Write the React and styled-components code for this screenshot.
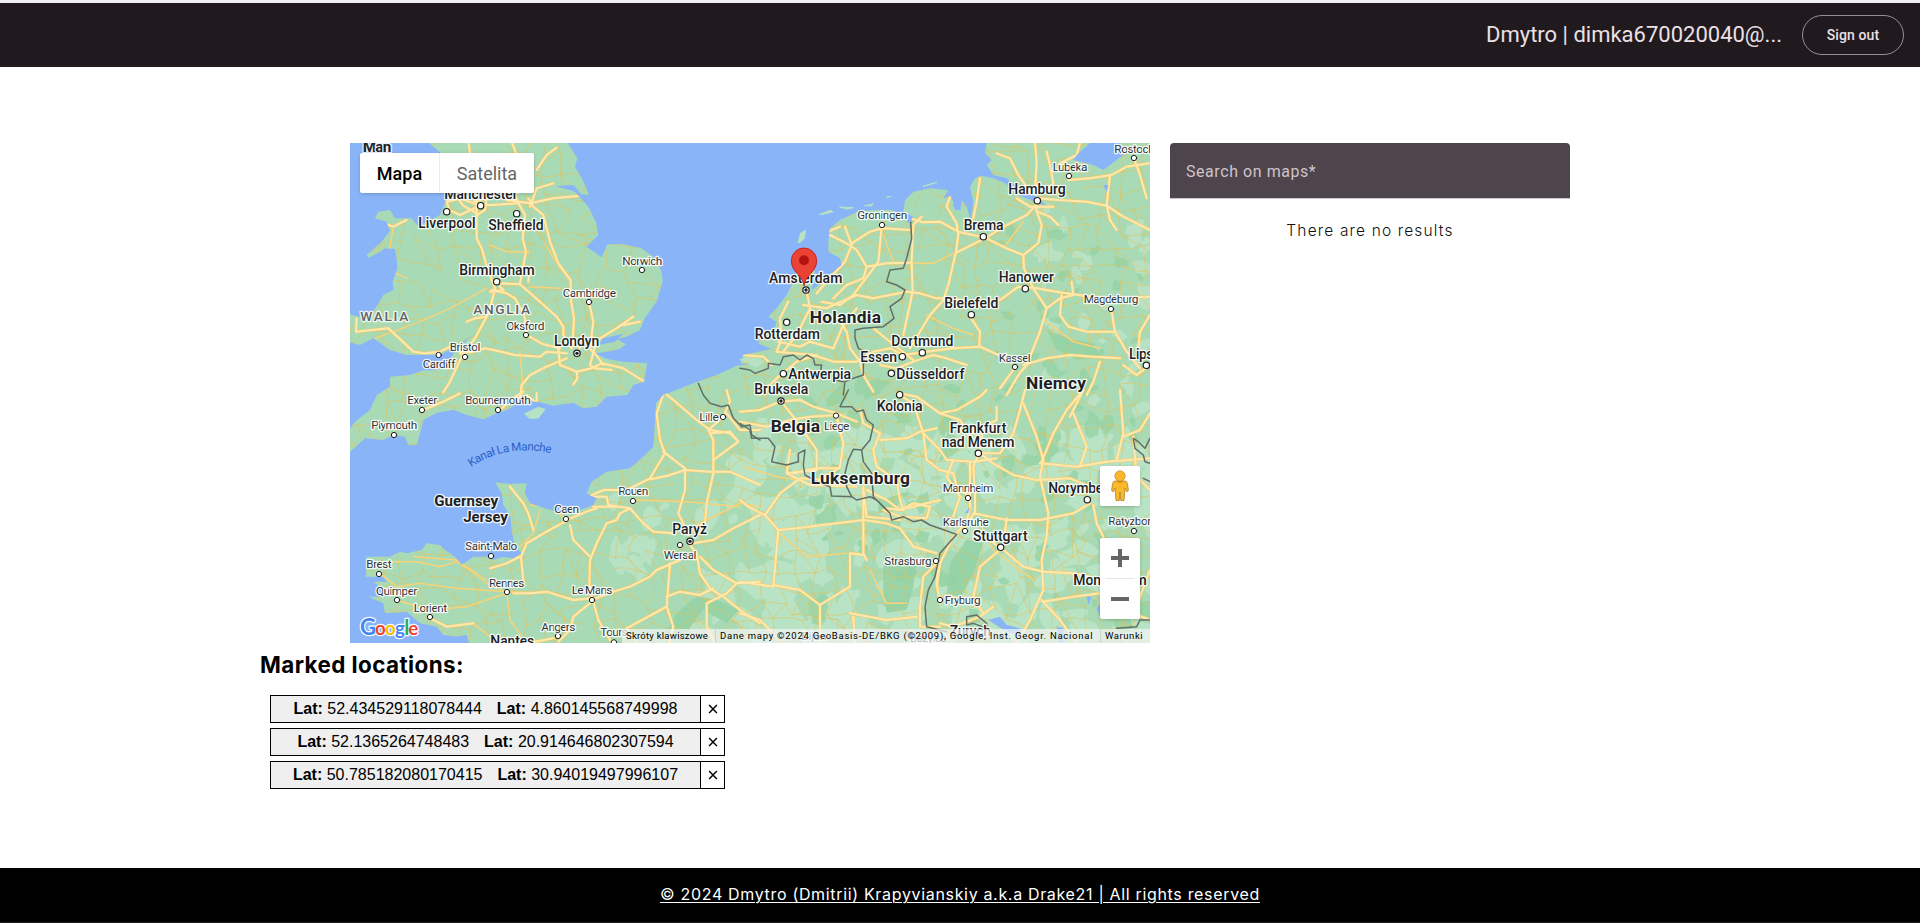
import React from 'react';
import styled, { createGlobalStyle } from 'styled-components';

const GlobalStyle = createGlobalStyle`
  *, *::before, *::after { box-sizing: border-box; }
  body { margin: 0; background: #fff; overflow: hidden; font-family: Inter, "Liberation Sans", sans-serif; }
  button { font: inherit; color: inherit; padding: 0; margin: 0; cursor: pointer; }
`;

const Page = styled.div`
  display: flex;
  flex-direction: column;
  height: 923px;
  border-top: 3px solid #f1eff2;
`;

const Header = styled.header`
  display: flex;
  align-items: center;
  justify-content: flex-end;
  gap: 20px;
  height: 64px;
  padding-right: 16px;
  background: #201a1e;
  color: #ebe0e4;
  font-family: Roboto, sans-serif;
`;

const UserName = styled.span`
  width: 296px;
  font-size: 22px;
  line-height: 28px;
  white-space: nowrap;
`;

const SignOut = styled.button`
  width: 102px;
  height: 40px;
  border: 1px solid #988e93;
  border-radius: 20px;
  background: transparent;
  font-size: 14px;
  font-weight: 500;
  letter-spacing: 0.1px;
`;

const Main = styled.main`
  flex: 1;
  width: 1400px;
  margin: 0 auto;
  padding-top: 76px;
`;

const MapRow = styled.section`
  display: flex;
  justify-content: center;
  gap: 20px;
`;

const MapFrame = styled.div`
  position: relative;
  width: 800px;
  height: 500px;
  overflow: hidden;
  background: #8ab4f8;
  font-family: Roboto, sans-serif;
`;

const MapDrawing = styled.svg`
  display: block;
  width: 100%;
  height: 100%;
`;

const MapTypes = styled.div`
  position: absolute;
  left: 10px;
  top: 10px;
  display: flex;
  height: 40px;
  border-radius: 2px;
  background: #fff;
  box-shadow: 0 1px 4px -1px rgba(0, 0, 0, 0.3);
`;

const MapType = styled.button`
  width: ${(p) => (p.$active ? '79px' : '95px')};
  border: 0;
  border-left: ${(p) => (p.$active ? '0' : '1px solid #ececec')};
  background: transparent;
  color: ${(p) => (p.$active ? '#000' : '#666')};
  font-size: 18px;
  font-weight: ${(p) => (p.$active ? 500 : 400)};
`;

const ControlPanel = styled.div`
  position: absolute;
  right: 10px;
  top: ${(p) => p.$top}px;
  display: flex;
  flex-direction: column;
  align-items: center;
  width: 40px;
  border-radius: 2px;
  background: #fff;
  box-shadow: 0 1px 4px -1px rgba(0, 0, 0, 0.3);
`;

const ControlButton = styled.button`
  display: grid;
  place-items: center;
  width: 40px;
  height: 40px;
  border: 0;
  background: transparent;
`;

const ControlDivider = styled.i`
  width: 30px;
  height: 1px;
  background: #e6e6e6;
`;

const Attribution = styled.div`
  position: absolute;
  right: 0;
  bottom: 0;
  display: flex;
  height: 14px;
  color: #000;
  font-size: 9.5px;
  line-height: 14px;
  white-space: nowrap;
`;

const Credit = styled.span`
  width: ${(p) => p.$w}px;
  padding-left: 4px;
  letter-spacing: ${(p) => p.$spacing}px;
  background: rgba(245, 245, 245, 0.7);
  border-left: ${(p) => (p.$line ? '1px solid #c9d4cb' : '0')};
`;

const SearchColumn = styled.aside`
  display: flex;
  flex-direction: column;
  width: 400px;
`;

const SearchField = styled.div`
  height: 56px;
  padding: 0 16px;
  border-bottom: 1px solid #cfc3cb;
  border-radius: 4px 4px 0 0;
  background: #4e444b;
  color: #d0c3cb;
  font-family: Roboto, sans-serif;
  font-size: 16px;
  line-height: 57px;
  letter-spacing: 0.56px;
`;

const EmptyResults = styled.p`
  margin: 19px 0 0;
  color: #111;
  text-align: center;
  font-size: 15.5px;
  font-weight: 300;
  line-height: 26px;
  letter-spacing: 1.15px;
`;

const Heading = styled.h2`
  margin: 5px 0 0;
  color: #000;
  font-size: 22.4px;
  font-weight: 700;
  line-height: 34px;
  letter-spacing: 0.42px;
`;

const LocationList = styled.div`
  display: flex;
  flex-direction: column;
  gap: 5px;
  padding: 13px 0 0 10px;
`;

const LocationRow = styled.div`
  display: flex;
  width: 455px;
  height: 28px;
  border: 1px solid #000;
  color: #000;
  font: 16px/26px "Liberation Sans", Arial, sans-serif;
`;

const Coordinates = styled.button`
  display: flex;
  justify-content: center;
  gap: 15px;
  width: 429px;
  border: 0;
  background: #efefef;
`;

const Remove = styled.button`
  display: grid;
  place-items: center;
  flex: 1;
  border: 0;
  border-left: 1px solid #000;
  background: #fff;
`;

const Footer = styled.footer`
  height: 55px;
  border-bottom: 1px solid #202020;
  background: #000;
  color: #fff;
  text-align: center;
  font-size: 16px;
  line-height: 53px;
  letter-spacing: 0.67px;
`;

const FooterLink = styled.a`
  color: inherit;
  text-decoration: underline;
  text-decoration-thickness: 1px;
  text-underline-offset: 2px;
`;

/* The map surface is drawn at 2400 x 1500 units; each quarter has its own origin. */
const QUARTERS = {
  nw: [-30, -24],
  ne: [1170, -24],
  sw: [-30, 741],
  se: [1170, 741],
};

const BRITAIN =
  'M262,20L680,20L700,50L712,70L705,95L728,135L747,180L722,178L690,158L665,158L700,166L722,190L745,215L768,262L775,300L740,335L785,367L802,328L850,328L905,340L945,370L965,410L968,440L950,500L915,548L900,585L860,605L830,612L858,628L840,642L800,650L765,655L800,672L850,680L922,685L918,705L912,740L880,750L862,780L800,785L770,815L730,820L700,803L640,812L600,802L550,795L500,825L470,835L430,853L390,843L340,825L290,833L250,855L240,895L230,930L205,930L195,905L160,900L130,915L75,910L20,960L20,895L45,860L90,825L110,780L150,755L150,725L210,720L250,706L290,706L320,688L345,650L395,602L350,633L300,660L250,660L200,660L150,645L100,610L60,630L20,620L20,535L55,545L100,530L130,480L160,465L158,440L172,400L170,370L165,342L135,340L120,350L87,368L80,360L125,320L150,288L140,260L105,250L115,230L150,225L165,250L215,250L235,275L300,240L310,215L320,190L305,130L300,80L310,60Z';
const CONTINENT =
  'M1910,0L1905,31L1925,51L1910,66L1930,96L1970,106L2010,141L2060,160L2090,190L2010,158L1965,120L1930,106L1895,98L1875,106L1860,131L1870,176L1862,230L1850,191L1835,171L1832,200L1815,201L1810,176L1802,160L1780,166L1795,141L1740,136L1690,146L1665,171L1660,206L1690,221L1675,238L1660,216L1625,201L1570,201L1520,208L1470,231L1440,256L1435,296L1435,331L1470,346L1475,366L1450,386L1420,406L1390,416L1410,371L1395,356L1385,331L1375,316L1350,321L1345,366L1335,406L1310,456L1280,496L1255,521L1280,536L1270,566L1230,576L1225,601L1265,618L1180,636L1172,662L1228,660L1160,668L1100,696L1030,721L940,756L918,781L915,831L910,911L875,946L840,976L770,986L725,1016L710,1051L740,1066L730,1086L690,1101L660,1106L620,1106L570,1091L540,1081L525,1051L530,1021L480,1023L435,1018L455,1051L460,1086L480,1116L485,1161L495,1211L515,1231L490,1246L460,1241L430,1251L410,1241L370,1241L335,1266L315,1241L285,1221L270,1206L230,1201L215,1221L170,1231L150,1226L120,1241L50,1241L48,1301L100,1301L110,1316L70,1316L100,1341L110,1361L55,1361L100,1381L105,1411L170,1406L210,1441L260,1451L280,1476L320,1481L350,1476L360,1510L2410,1510L2410,0L2310,0L2320,36L2280,66L2260,81L2230,66L2170,51L2180,36L2220,0Z';
const ISLANDS =
  'M1344,298L1352,270L1366,262L1364,285L1352,297ZM1410,214L1440,202L1450,206L1418,214ZM1470,192L1510,194L1490,198ZM1545,188L1570,183L1565,188ZM1610,163L1623,160ZM1720,130L1760,118ZM1170,650L1200,640L1245,655L1220,672ZM525,812L565,793L585,799L565,825L540,826ZM1385,371L1410,350L1418,365L1395,375Z';

const highways = {
  nw: [
    'M385,20L390,52', 'M515,20L528,55', 'M650,38L620,60L590,105', 'M590,160L640,145',
    'M410,200L410,310L425,340L442,400L465,460L448,530L405,610L370,655L330,740L310,772',
    'M320,200L360,190L420,212L360,240L328,225L320,200', 'M410,235L370,212L355,192', 'M400,200L440,190L435,225L412,240',
    'M430,210L460,210L530,205', 'M565,190L580,215L610,240L630,320L655,385L692,435L692,490L702,550L698,620L720,640',
    'M522,180L555,240L548,310L558,350L540,445', 'M500,195L570,205L640,190L720,182', 'M590,160L570,215',
    'M475,445L540,448L600,500L650,545L670,575L670,600L695,640',
    'M565,440L568,395', 'M455,465L500,475L525,490L553,540L560,600L610,628L660,640',
    'M450,470L490,465L480,455', 'M50,550L48,590L145,580L180,612L220,650L255,655L300,650L330,635',
    'M360,655L400,650L435,640L460,645L525,660L600,665L620,650L680,655', 'M380,560L405,550L440,545',
    'M765,635L750,690L765,700L815,705', 'M747,502L760,560L750,640L762,655',
    'M780,610L830,580L880,545', 'M655,640L660,690L710,710L755,700L785,685L850,700L910,738', 'M680,670L620,695L570,720L545,750L540,790',
    'M710,710L712,730L700,748', 'M765,655L790,690', 'M100,255L160,275L200,255', 'M850,570L900,560',
  ],
  ne: [
    'M885,24L890,80L885,170L890,230L905,270L895,325L850,360L852,400L880,460L920,520L900,590L880,640L860,690L835,720L800,780',
    'M770,55L810,70L835,120L880,185', 'M895,190L955,195L1040,200L1100,212L1150,245L1230,285', 'M920,50L930,90L940,145L915,175',
    'M1020,24L1010,60L960,85', 'M985,135L1050,130L1115,120L1160,95L1230,85', 'M1182,70L1200,120L1220,190',
    'M1110,120L1100,210L1110,255L1130,285', 'M893,205L860,240L800,270L735,310L650,352', 'M720,130L710,200L700,250',
    'M630,185L620,215L650,265L655,300L648,350L625,450L610,495L570,540L510,640', 'M655,290L735,308L800,340L850,360',
    'M480,240L550,262L600,260L655,290', 'M545,245L520,270L515,380L518,470L490,600', 'M425,275L415,380L340,480L300,510L245,500',
    'M180,340L220,320L265,290L300,275', 'M270,300L320,325L350,345L380,395L370,430L320,450L280,490',
    'M315,275L335,330L315,380L260,440L230,475', 'M380,395L440,385L515,383', 'M335,325L390,290L425,280L510,285',
    'M200,470L210,520L190,560L170,600L130,650', 'M190,510L260,520L280,510L350,480L400,490L450,480L500,470',
    'M500,470L540,475L590,490L640,490L720,510L780,495L835,455L890,460L950,470L1030,482L1110,490L1230,485',
    'M145,500L120,550L125,610L110,650', 'M115,620L180,635L210,620L280,640L310,570L350,520', 'M300,560L320,590L330,640L360,680L370,720L400,770',
    'M110,650L220,660L280,680L350,680L400,650L450,640L490,660L560,650L640,640L720,635L775,660', 'M400,580L450,620L520,675',
    'M690,545L720,590L718,635', 'M850,690L920,670L990,660L1060,665L1140,670', 'M1115,530L1125,590L1160,650L1200,700',
    'M965,480L960,540L985,575L1040,590L1125,590', 'M1080,680L1060,740L1040,780', 'M420,690L470,700L520,680L580,660L620,670L680,690',
    'M10,660L70,665L95,690', 'M130,430L105,490', 'M60,780L110,730L170,680L230,660', 'M825,698L780,760', 'M1150,690L1190,720L1230,690',
    'M1230,540L1200,590L1195,640', 'M830,190L870,215L940,215', 'M890,230L930,245L955,270', 'M920,520L960,490L1000,480L995,440',
  ],
  sw: [
    'M970,12L950,70L960,150L975,190L930,265L860,300L790,300L745,320', 'M975,10L1000,30L1070,90L1110,120L1170,130L1190,150',
    'M970,185L1035,235L1035,300L1015,370L1030,400L1045,435', 'M930,268L980,258L1035,240L1110,245L1170,245L1260,285',
    'M1150,80L1170,35L1160,0', 'M1150,80L1105,120L1120,150L1120,250L1100,340L1095,400L1065,435', 'M1110,130L1170,125L1195,155L1120,210',
    'M745,320L800,320L805,345L870,355L910,400L940,425L1000,430', 'M760,350L830,350', 'M680,390L740,365L770,355', 'M675,395L620,425L560,460L543,500L550,575',
    'M450,535L500,520L540,500', 'M520,610L570,610L620,605L700,630L755,625', 'M690,405L700,450L750,500', 'M870,355L840,370L830,390L800,400L770,460L750,510L748,580L755,620',
    'M755,630L820,605L870,590L930,560L950,540L1020,510', 'M755,635L700,680L690,720L655,755', 'M760,635L775,690L810,750', 'M990,520L980,650L860,715',
    'M1050,465L1070,490L1080,550L1110,595L1150,620L1200,660L1260,700', 'M1060,460L1120,450L1180,415L1260,375', 'M1080,500L1120,540L1190,580L1260,575',
    'M980,650L1000,710L985,770', 'M980,620L1020,605L1080,615L1120,595', 'M1190,580L1160,610L1100,640L1100,710L1130,770', 'M860,715L890,760',
    'M270,685L320,710L400,700', 'M510,290L550,340L565,370L580,420', 'M250,60L310,35L360,10', 'M480,60L520,25L550,5', 'M560,15L590,40L590,10',
    'M1260,120L1200,120L1160,70', 'M640,745L560,760',
  ],
  se: [
    'M0,65L60,60L120,35L180,30L220,50L290,70L350,95', 'M0,95L80,110L150,90L210,80L290,75', 'M120,30L160,80L230,180L230,240L140,250',
    'M290,80L310,160L300,230L250,270L180,265L120,310L75,375L25,350L0,330', 'M150,180L140,250L210,285L350,290',
    'M75,375L115,420L170,415L290,400L370,390L440,400L480,415L520,470', 'M115,420L100,590L0,575', 'M100,585L180,600L240,645L240,760',
    'M240,645L330,590L330,490L370,495', 'M370,290L370,490L380,510', 'M370,300L380,380L480,390', 'M360,60L370,100L420,130L400,180L410,230L470,270L480,330L490,360',
    'M470,10L520,40L550,130L560,210L600,240L640,250L650,290L690,320', 'M480,10L530,20L600,70L660,90L700,150', 'M420,150L500,145L540,125L590,115',
    'M550,130L600,180L620,210L700,215L770,205', 'M720,190L760,220L820,255L890,270L990,265L1050,290', 'M715,195L700,230L705,310L705,370L640,440L600,520L590,590',
    'M690,215L690,350L675,420', 'M640,210L620,260L660,320L640,380', 'M720,190L780,190L820,130L840,60L855,0', 'M850,40L890,140L910,210L900,260L925,370L920,440L905,510L910,600L870,690L830,760',
    'M900,220L1010,230L1100,215L1230,205', 'M905,215L940,130L980,60L1030,0', 'M1000,70L1040,170L1020,230', 'M1140,0L1150,130L1130,210', 'M700,370L800,390L900,390L1000,370L1050,340',
    'M800,385L790,470L720,530L700,620L730,670', 'M790,480L850,530L910,545L1000,550L1050,560', 'M740,440L780,475', 'M590,520L550,560L540,650L540,710L600,710',
    'M595,500L590,580L600,640', 'M520,470L590,490', 'M430,360L480,380L560,385L570,350L520,340L480,360L440,355', 'M380,300L440,330L480,360L600,330',
    'M910,635L1000,620L1080,610', 'M905,630L960,690L1010,760', 'M1060,345L1070,400L1090,440', 'M0,670L60,690L120,750', 'M330,670L440,690L530,680',
    'M1150,140L1200,120L1230,70', 'M1180,140L1190,260L1230,300', 'M1230,540L1200,620L1180,670L1230,690', 'M160,250L230,235L300,235',
    'M340,680L345,760', 'M600,700L640,710L720,680L760,650', 'M1030,0L990,80', 'M600,70L650,60L720,20L740,0', 'M770,50L770,90L730,110L720,190',
  ],
};

const byways = {
  nw: ['M448,330L500,350L570,350', 'M615,325L650,385L690,440', 'M570,455L660,460', 'M540,650L545,710L550,780', 'M160,275L140,400L200,430', 'M105,610L240,560L330,520L440,460'],
  ne: ['M515,385L580,385L640,355', 'M850,260L790,340', 'M920,560L1000,620L1080,640', 'M430,300L460,380', 'M560,540L640,580L700,600'],
  sw: ['M220,500L350,510L440,570', 'M1060,410L1200,340L1260,350', 'M880,330L1040,335L1200,350', 'M600,360L580,430L540,470',
    'M120,550L170,590L240,580L350,595L500,605', 'M170,630L220,645L270,660L380,650L500,610', 'M400,700L450,740', 'M500,605L510,690L560,760',
    'M500,605L640,610', 'M570,345L630,350L670,380', 'M160,515L230,515L300,530L350,515L390,540L440,580L500,605'],
  se: ['M120,430L200,500L320,490', 'M390,540L440,640L500,640', 'M600,620L680,620L720,660', 'M720,400L760,480L880,570', 'M10,230L110,260L180,270'],
};

const borders = {
  ne: ['M512,262L515,310L500,370L490,400L450,405L440,440L470,450L495,465L485,490L450,515L462,550L430,575L370,580L345,585L345,610L355,640L375,650L370,690L370,720L340,730L315,740L310,780',
    'M0,700L30,705L45,715L85,700L85,685L120,690L130,665L160,660L180,675L200,660L220,670L225,690L245,690L240,715L280,710L285,735L310,740'],
  nw: ['M1075,745L1090,780L1110,805L1145,815L1165,810L1180,850L1205,875L1230,870L1235,900L1260,915'],
  se: ['M0,100L30,120L35,145L85,145L105,170L95,215L140,225L175,215L175,190L195,180L190,225L195,255L240,280L270,290L275,318L335,320L350,330L390,320L410,330L450,370L455,390L490,380L520,395L545,390L570,405L650,433L600,490L585,560L565,600L555,650L560,710L620,725',
    'M325,0L300,50L335,50L350,65L370,60L380,90L400,105L390,150L365,180L340,178L325,210L315,250L320,290L335,320', 'M365,180L370,215L395,250L400,320L440,360',
    'M680,680L710,675L740,700L740,715L700,700L680,705L680,680', 'M1230,145L1215,175L1195,155L1180,145L1185,175L1210,195L1215,215L1230,220', 'M1230,275L1210,265', 'M1130,715L1190,710L1200,690L1230,690'],
};

const lakes = {
  se: ['M745,690L780,680L800,705L840,715L840,735L800,725ZM1070,655L1085,635L1080,680ZM1040,620L1055,620L1045,645ZM950,710L970,715L970,760L955,755Z', 'M675,370L690,350L685,370Z'],
  nw: ['M790,610L850,596L825,620L775,630ZM645,153L700,150L725,178L692,166Z'],
  ne: ['M500,245L515,248L515,264L502,262ZM640,180L662,205L655,225L640,212ZM205,345L232,360L265,350L300,370L250,440L215,465L225,410L208,385ZM1090,150L1105,150L1100,170Z'],
};

function seeded(seed) {
  let s = seed;
  return () => {
    s = (s * 16807) % 2147483647;
    return s / 2147483647;
  };
}

function buildLocalRoads() {
  const rnd = seeded(71);
  const step = 54;
  const cols = 46;
  const rows = 30;
  const pts = [];
  for (let r = 0; r < rows; r++) {
    for (let c = 0; c < cols; c++) {
      pts.push([c * step + (rnd() - 0.5) * 48 - 10, r * step + (rnd() - 0.5) * 48 - 10]);
    }
  }
  let d = '';
  const join = (a, b) => {
    const mx = (a[0] + b[0]) / 2 + (rnd() - 0.5) * 26;
    const my = (a[1] + b[1]) / 2 + (rnd() - 0.5) * 26;
    d += `M${a[0].toFixed()},${a[1].toFixed()}Q${mx.toFixed()},${my.toFixed()} ${b[0].toFixed()},${b[1].toFixed()}`;
  };
  for (let r = 0; r < rows - 1; r++) {
    for (let c = 0; c < cols - 1; c++) {
      const i = r * cols + c;
      if (rnd() > 0.2) join(pts[i], pts[i + 1]);
      if (rnd() > 0.25) join(pts[i], pts[i + cols]);
      if (rnd() > 0.75) join(pts[i], pts[i + cols + 1]);
    }
  }
  return d;
}

function buildPatches(seed, count, region, min, max) {
  const rnd = seeded(seed);
  let d = '';
  for (let i = 0; i < count; i++) {
    const cx = region[0] + rnd() * region[2];
    const cy = region[1] + rnd() * region[3];
    const size = min + rnd() * (max - min);
    const tilt = rnd() * 3;
    for (let k = 0; k < 11; k++) {
      const a = (k / 11) * Math.PI * 2;
      const rad = size * (0.55 + rnd() * 0.6);
      const px = Math.cos(a) * rad;
      const py = Math.sin(a) * rad * 0.6;
      const x = cx + px * Math.cos(tilt) - py * Math.sin(tilt);
      const y = cy + px * Math.sin(tilt) + py * Math.cos(tilt);
      d += `${k ? 'L' : 'M'}${x.toFixed()},${y.toFixed()}`;
    }
    d += 'Z';
  }
  return d;
}

const LOCAL_ROADS = buildLocalRoads();
const PALE = buildPatches(9, 170, [1180, 860, 1240, 640], 25, 85);
const PALE_EAST = buildPatches(17, 30, [2080, 180, 320, 620], 14, 42);
const PALE_LOIRE = buildPatches(23, 25, [790, 1070, 420, 440], 18, 60);
const WOODS = buildPatches(31, 75, [1380, 720, 1020, 730], 12, 48);
const WOODS_EAST = buildPatches(44, 22, [1950, 260, 450, 480], 12, 36);
const VOSGES = 'M1600,1270L1640,1240L1700,1260L1690,1330L1670,1400L1610,1410L1600,1340ZM1800,1260L1850,1190L1900,1200L1870,1290L1830,1370L1790,1350ZM2090,560L2160,590L2230,600L2250,640L2180,650L2120,620ZM980,1410L1040,1360L1100,1370L1170,1400L1130,1440L1060,1400L1000,1480L940,1480Z';

/* kind: c = city, t = town, n = country, i = island, r = region; [text, x centre, baseline, width, kind] */
const labels = {
  nw: [
    ['Man', 111, 52, 86, 'i'], ['Manchester', 423, 192, 220, 'c'], ['Liverpool', 321, 279, 172, 'c'], ['Sheffield', 528, 285, 166, 'c'],
    ['Birmingham', 471, 420, 226, 'c'], ['Norwich', 907, 390, 120, 't'], ['Cambridge', 748, 486, 160, 't'], ['ANGLIA', 485, 536, 170, 'r'],
    ['WALIA', 133, 557, 144, 'r'], ['Oksford', 556, 584, 114, 't'], ['Londyn', 710, 633, 136, 'c'], ['Bristol', 375, 647, 92, 't'], ['Cardiff', 297, 698, 98, 't'],
  ],
  ne: [
    ['Rostock', 1183, 53, 120, 't'], ['Lubeka', 990, 108, 104, 't'], ['Hamburg', 891, 178, 172, 'c'], ['Groningen', 427, 252, 150, 't'],
    ['Brema', 731, 285, 120, 'c'], ['Amsterdam', 197, 444, 220, 'c'], ['Hanower', 859, 441, 166, 'c'], ['Magdeburg', 1113, 503, 164, 't'],
    ['Bielefeld', 694, 519, 162, 'c'], ['Holandia', 316, 565, 214, 'n'], ['Rotterdam', 142, 612, 196, 'c'], ['Dortmund', 547, 633, 186, 'c'],
    ['Essen', 416, 681, 110, 'c'], ['Kassel', 824, 681, 96, 't'], ['Lipsk', 1214, 672, 94, 'c'], ['Antwerpia', 239, 732, 188, 'c'],
    ['Düsseldorf', 571, 732, 204, 'c'], ['Niemcy', 948, 762, 180, 'n'], ['Bruksela', 124, 777, 162, 'c'],
  ],
  sw: [
    ['Exeter', 247, 42, 90, 't'], ['Bournemouth', 474, 43, 196, 't'], ['Plymouth', 163, 116, 138, 't'], ['Lille', 1107, 92, 58, 't'],
    ['Rouen', 880, 315, 90, 't'], ['Guernsey', 379, 347, 192, 'i'], ['Jersey', 437, 395, 134, 'i'], ['Caen', 680, 369, 74, 't'],
    ['Paryż', 1049, 432, 104, 'c'], ['Saint-Malo', 454, 479, 156, 't'], ['Wersal', 1020, 506, 98, 't'], ['Brest', 117, 533, 76, 't'],
    ['Rennes', 500, 590, 106, 't'], ['Quimper', 170, 615, 124, 't'], ['Le Mans', 756, 612, 122, 't'], ['Lorient', 271, 665, 100, 't'],
    ['Angers', 655, 722, 102, 't'], ['Tours', 822, 737, 82, 't'], ['Nantes', 517, 768, 132, 'c'],
  ],
  se: [
    ['Kolonia', 479, 63, 138, 'c'], ['Belgia', 166, 125, 148, 'n'], ['Liege', 290, 119, 76, 't'], ['Frankfurt', 714, 129, 170, 'c'],
    ['nad Menem', 714, 171, 218, 'c'], ['Luksemburg', 361, 283, 298, 'n'], ['Mannheim', 684, 305, 152, 't'], ['Norymberga', 1036, 309, 222, 'c'],
    ['Karlsruhe', 677, 407, 138, 't'], ['Ratyzbona', 1182, 404, 154, 't'], ['Stuttgart', 781, 453, 164, 'c'], ['Strasburg', 504, 524, 142, 't'],
    ['Monachium', 1110, 585, 220, 'c'], ['Fryburg', 668, 641, 108, 't'], ['Zurych', 691, 737, 124, 'c'], ['Bazylea', 565, 757, 110, 't'], ['Dijon', 222, 750, 76, 't'],
  ],
};

const dots = {
  nw: [[422, 212, 1], [320, 230, 1], [530, 236, 1], [470, 440, 1], [906, 405], [747, 501], [558, 600], [711, 655, 2], [375, 666], [296, 660]],
  ne: [[1182, 69], [987, 123], [892, 197, 1], [426, 270], [730, 305, 1], [198, 465, 2], [856, 461, 1], [1113, 522], [694, 539, 1], [140, 562, 1],
    [547, 653, 1], [487, 665, 1], [825, 696], [1219, 691, 1], [130, 716, 1], [454, 715, 1]],
  sw: [[246, 60], [474, 60], [162, 135], [1149, 81], [879, 333], [678, 387], [1020, 465], [1050, 454, 2], [453, 498], [117, 552], [171, 630],
    [501, 606], [756, 630], [270, 681], [654, 738], [822, 757]],
  se: [[123, 33, 2], [288, 77], [479, 14, 1], [715, 190, 1], [684, 324], [1042, 329, 1], [675, 423], [1182, 423], [782, 472, 1], [588, 513], [600, 630]],
};

const KINDS = {
  c: { size: 42, weight: 500, fill: '#202124' },
  t: { size: 35.5, weight: 400, fill: '#303438' },
  n: { size: 52, weight: 700, fill: '#202124' },
  i: { size: 46, weight: 700, fill: '#202124' },
  r: { size: 41, weight: 500, fill: '#5d6567' },
};

function EachQuarter({ data, render }) {
  return Object.entries(data).map(([key, items]) => (
    <g key={key} transform={`translate(${QUARTERS[key].join(',')})`}>
      {items.map(render)}
    </g>
  ));
}

function PlaceLabel({ item: [text, x, y, width, kind] }) {
  const k = KINDS[kind];
  return (
    <text
      x={x} y={y} textAnchor="middle" textLength={width} lengthAdjust="spacing" fontSize={k.size} fontWeight={k.weight}
      fill={k.fill} stroke="#fff" strokeOpacity="0.85" strokeWidth="8" strokeLinejoin="round" paintOrder="stroke"
    >
      {text}
    </text>
  );
}

function PlaceDot({ item: [x, y, rank] }) {
  return (
    <g>
      <circle cx={x} cy={y} r={rank ? 9.5 : 8} fill="#fff" stroke="#202124" strokeWidth={rank ? 3.6 : 3} />
      {rank === 2 && <circle cx={x} cy={y} r="5" fill="#202124" />}
    </g>
  );
}

const logoLetters = [
  ['G', 30, '#4285f4', 66], ['o', 75, '#ea4335', 56], ['o', 105, '#fbbc04', 56],
  ['g', 135, '#4285f4', 56], ['l', 163, '#34a853', 62], ['e', 175, '#ea4335', 56],
];

function GoogleLogo() {
  return [true, false].map((halo) => (
    <g key={String(halo)} fontFamily="Lato" fontWeight="700" stroke={halo ? '#fff' : 'none'} strokeWidth="7">
      {logoLetters.map(([letter, x, color, size]) => (
        <text key={x} x={x} y="1475" fontSize={size} fill={color}>{letter}</text>
      ))}
    </g>
  ));
}

function MapSurface() {
  return (
    <MapDrawing viewBox="0 0 2400 1500" fill="none" strokeLinejoin="round" strokeLinecap="round">
      <defs>
        <clipPath id="land">
          <path d={BRITAIN} transform="translate(-30,-24)" />
          <path d={CONTINENT} />
        </clipPath>
      </defs>
      <path d={BRITAIN} transform="translate(-30,-24)" fill="#a8dab5" />
      <path d={CONTINENT} fill="#a8dab5" />
      <path d={ISLANDS} fill="#b7e2c4" stroke="#b7e2c4" strokeWidth="3" />
      <g clipPath="url(#land)">
        <path d={PALE} fill="#bbe4c8" opacity="0.85" />
        <path d={PALE_EAST} fill="#c1e6cb" opacity="0.7" />
        <path d={PALE_LOIRE} fill="#bbe4c8" opacity="0.8" />
        <path d={WOODS} fill="#94d2a5" opacity="0.8" />
        <path d={WOODS_EAST} fill="#94d2a5" opacity="0.8" />
        <path d={VOSGES} fill="#94d2a5" opacity="0.9" />
        <path d={LOCAL_ROADS} stroke="#e3c35c" strokeWidth="2.3" opacity="0.78" />
        <EachQuarter data={byways} render={(d) => <path key={d} d={d} stroke="#f8d377" strokeWidth="4.5" />} />
        <EachQuarter data={highways} render={(d) => <path key={d} d={d} stroke="#f8cb66" strokeWidth="9" />} />
        <EachQuarter data={highways} render={(d) => <path key={d} d={d} stroke="#ffe9ae" strokeWidth="6" />} />
      </g>
      <EachQuarter data={lakes} render={(d) => <path key={d} d={d} fill="#8ab4f8" />} />
      <EachQuarter data={borders} render={(d) => <path key={d} d={d} stroke="#62706a" strokeWidth="4.5" />} />
      <EachQuarter data={dots} render={(item) => <PlaceDot key={item.join()} item={item} />} />
      <EachQuarter data={labels} render={(item) => <PlaceLabel key={item[0]} item={item} />} />
      <path id="channel" d="M363,972Q470,900 610,932" />
      <text fontSize="35" fill="#2b62c8" textLength="250">
        <textPath href="#channel">Kanał La Manche</textPath>
      </text>
      <g transform="translate(1362,315)">
        <path d="M0,112C-3,82 -38,72 -38,38A38,38 0 0 1 38,38C38,72 3,82 0,112Z" fill="#ea4335" stroke="#c5221f" strokeWidth="3" />
        <circle cx="0" cy="37" r="15" fill="#b31412" />
      </g>
      <GoogleLogo />
    </MapDrawing>
  );
}

function Pegman() {
  return (
    <svg width="18" height="32" viewBox="0 0 18 32">
      <path d="M4,11H14Q16,11 16.5,14L17.3,20Q17.5,21.5 15.5,21.5L14,18L13,30.5H9.7L9,22L8.3,30.5H5L4,18L2.5,21.5Q.5,21.5 .7,20L1.5,14Q2,11 4,11Z" fill="#fbb829" stroke="#a9822a" strokeWidth=".8" />
      <circle cx="9" cy="6" r="5.2" fill="#fbb829" stroke="#b68b2c" strokeWidth=".7" />
      <path d="M5,11Q9,15 13,11Z" fill="#d68a12" />
    </svg>
  );
}

function GlyphIcon({ d, size = 18, color = '#666', width = 4 }) {
  return (
    <svg width={size} height={size} viewBox="0 0 18 18">
      <path d={d} stroke={color} strokeWidth={width} fill="none" />
    </svg>
  );
}

const locations = [
  ['52.434529118078444', '4.860145568749998'],
  ['52.1365264748483', '20.914646802307594'],
  ['50.785182080170415', '30.94019497996107'],
];

export default function App() {
  return (
    <Page>
      <GlobalStyle />
      <Header>
        <UserName>Dmytro | dimka670020040@...</UserName>
        <SignOut>Sign out</SignOut>
      </Header>
      <Main>
        <MapRow>
          <MapFrame>
            <MapSurface />
            <MapTypes>
              <MapType $active>Mapa</MapType>
              <MapType>Satelita</MapType>
            </MapTypes>
            <ControlPanel $top={323}>
              <ControlButton aria-label="Street View"><Pegman /></ControlButton>
            </ControlPanel>
            <ControlPanel $top={395}>
              <ControlButton aria-label="+"><GlyphIcon d="M0,9H18M9,0V18" /></ControlButton>
              <ControlDivider />
              <ControlButton aria-label="-"><GlyphIcon d="M0,9H18" /></ControlButton>
            </ControlPanel>
            <Attribution>
              <Credit $w={93} $spacing={0.25}>Skróty klawiszowe</Credit>
              <Credit $w={385} $spacing={0.74} $line>
                Dane mapy ©2024 GeoBasis-DE/BKG (©2009), Google, Inst. Geogr. Nacional
              </Credit>
              <Credit $w={50} $spacing={0.55} $line>Warunki</Credit>
            </Attribution>
          </MapFrame>
          <SearchColumn>
            <SearchField>Search on maps*</SearchField>
            <EmptyResults>There are no results</EmptyResults>
          </SearchColumn>
        </MapRow>
        <Heading>Marked locations:</Heading>
        <LocationList>
          {locations.map(([a, b]) => (
            <LocationRow key={a}>
              <Coordinates>
                <span><b>Lat:</b> {a}</span>
                <span><b>Lat:</b> {b}</span>
              </Coordinates>
              <Remove aria-label="Remove">
                <GlyphIcon d="M2,2L16,16M16,2L2,16" size={10} color="#000" width={2.6} />
              </Remove>
            </LocationRow>
          ))}
        </LocationList>
      </Main>
      <Footer>
        <FooterLink>© 2024 Dmytro (Dmitrii) Krapyvianskiy a.k.a Drake21 | All rights reserved</FooterLink>
      </Footer>
    </Page>
  );
}
